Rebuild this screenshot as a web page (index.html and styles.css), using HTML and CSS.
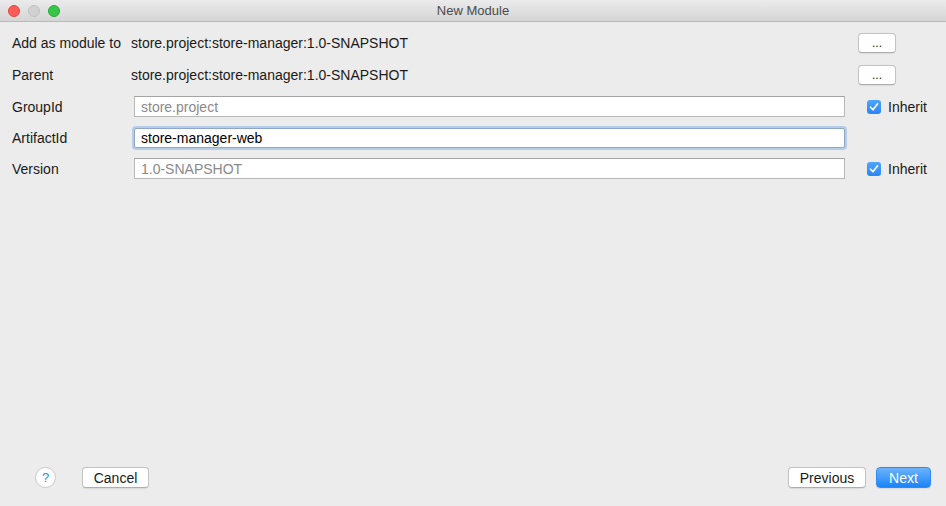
FILE: index.html
```html
<!DOCTYPE html>
<html lang="en">
<head>
    <meta charset="UTF-8">
    <title>New Module</title>
    <link rel="stylesheet" href="styles.css">
</head>
<body>
    <div class="window">
        <div class="titlebar">
            <div class="lights">
                <span class="light red"></span>
                <span class="light gray"></span>
                <span class="light green"></span>
            </div>
            <div class="title">New Module</div>
        </div>

        <div class="form">
            <div class="label">Add as module to</div>
            <div class="value">store.project:store-manager:1.0-SNAPSHOT</div>
            <div class="extra"><button class="btn dots">...</button></div>

            <div class="label">Parent</div>
            <div class="value">store.project:store-manager:1.0-SNAPSHOT</div>
            <div class="extra"><button class="btn dots">...</button></div>

            <div class="label">GroupId</div>
            <div class="field"><input class="text-input" type="text" value="store.project" disabled></div>
            <div class="extra">
                <label class="check"><span class="box"><svg width="10" height="10" viewBox="0 0 10 10"><path d="M1.5 5.2 L4 7.8 L8.6 1.8" fill="none" stroke="#fff" stroke-width="1.6" stroke-linecap="round" stroke-linejoin="round"/></svg></span>Inherit</label>
            </div>

            <div class="label">ArtifactId</div>
            <div class="field"><input class="text-input focused" type="text" value="store-manager-web"></div>
            <div class="extra"></div>

            <div class="label">Version</div>
            <div class="field"><input class="text-input" type="text" value="1.0-SNAPSHOT" disabled></div>
            <div class="extra">
                <label class="check"><span class="box"><svg width="10" height="10" viewBox="0 0 10 10"><path d="M1.5 5.2 L4 7.8 L8.6 1.8" fill="none" stroke="#fff" stroke-width="1.6" stroke-linecap="round" stroke-linejoin="round"/></svg></span>Inherit</label>
            </div>
        </div>

        <div class="footer">
            <button class="help">?</button>
            <button class="btn cancel">Cancel</button>
            <div class="spacer"></div>
            <button class="btn prev">Previous</button>
            <button class="btn next">Next</button>
        </div>
    </div>
</body>
</html>
```

FILE: styles.css
```css
* {
    box-sizing: border-box;
    margin: 0;
    padding: 0;
}

body {
    background: #ececec;
    font-family: 'Liberation Sans', Arial, sans-serif;
    font-size: 14px;
    color: #1a1a1a;
}

.window {
    width: 946px;
    height: 506px;
    display: flex;
    flex-direction: column;
    background: #ececec;
}

/* title bar */
.titlebar {
    height: 22px;
    position: relative;
    background: linear-gradient(#ebebeb, #d5d5d5);
    border-bottom: 1px solid #b9b9b9;
    display: flex;
    align-items: center;
    justify-content: center;
}

.lights {
    position: absolute;
    left: 8px;
    top: 5px;
    display: flex;
    gap: 8px;
}

.light {
    width: 12px;
    height: 12px;
    border-radius: 50%;
}

.light.red {
    background: #fc5b57;
    border: 1px solid #e2463f;
}

.light.gray {
    background: #d1d1d1;
    border: 1px solid #c2c2c2;
}

.light.green {
    background: #34c748;
    border: 1px solid #27aa35;
}

.title {
    font-size: 13px;
    color: #4a4a4a;
}

/* form */
.form {
    flex: 1;
    padding: 5px 0 0 12px;
    display: grid;
    grid-template-columns: 119px 727px 1fr;
    grid-template-rows: 32px 32px 31px 31px 31px;
    align-content: start;
    align-items: center;
}

.label {
    color: #1a1a1a;
}

.value {
    color: #1a1a1a;
}

.field {
    padding-left: 3px;
}

.text-input {
    width: 711px;
    height: 21px;
    border: 1px solid #b8b8b8;
    border-top-color: #a4a4a4;
    background: #fff;
    padding: 0 6px;
    font-family: inherit;
    font-size: 14px;
    color: #000;
    outline: none;
}

.text-input:disabled {
    color: #8a8a8a;
    background: #fff;
}

.text-input.focused {
    border-color: #8fa6c6;
    border-radius: 2px;
    box-shadow: 0 0 0 2px #b6cdea;
    height: 20px;
}

.extra {
    display: flex;
    align-items: center;
}

.btn {
    font-family: inherit;
    font-size: 14px;
    color: #1a1a1a;
    background: #fff;
    border: 1px solid #c4c4c4;
    border-bottom-color: #aeaeae;
    border-radius: 4px;
    height: 21px;
    box-shadow: 0 0.5px 1px rgba(0, 0, 0, 0.08);
}

.dots {
    width: 38px;
    height: 20px;
    font-size: 12px;
    line-height: 1;
}

.check {
    display: flex;
    align-items: center;
    gap: 7px;
    margin-left: 9px;
    color: #1a1a1a;
}

.box {
    width: 14px;
    height: 14px;
    border-radius: 3px;
    background: linear-gradient(#4ea5fc, #2b86f8);
    display: flex;
    align-items: center;
    justify-content: center;
}

/* footer */
.footer {
    display: flex;
    align-items: center;
    padding: 0 15px 18px 35px;
}

.help {
    width: 21px;
    height: 21px;
    border-radius: 50%;
    background: #fff;
    border: 1px solid #c9c9c9;
    color: #3c86df;
    font-family: inherit;
    font-size: 13px;
    margin-right: 26px;
}

.cancel {
    width: 67px;
}

.spacer {
    flex: 1;
}

.prev {
    width: 78px;
    margin-right: 10px;
}

.next {
    width: 55px;
    color: #fff;
    border: 1px solid #2f8cf5;
    background: linear-gradient(#6cb3fa, #1a84fb);
}
```
